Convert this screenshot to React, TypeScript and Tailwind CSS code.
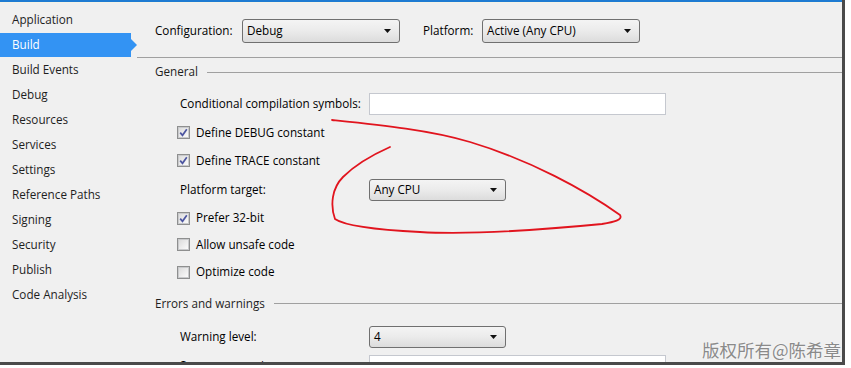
import React from "react";

const navItems = [
  "Application",
  "Build",
  "Build Events",
  "Debug",
  "Resources",
  "Services",
  "Settings",
  "Reference Paths",
  "Signing",
  "Security",
  "Publish",
  "Code Analysis",
];

function Combo({ text, width }: { text: string; width: number }) {
  return (
    <div
      className="relative flex h-full items-center rounded-[3px] border border-[#707070] bg-gradient-to-b from-[#f4f4f4] via-[#ebebeb] to-[#dcdcdc] pl-[4px] text-black"
      style={{ width }}
    >
      <span>{text}</span>
      <svg className="absolute right-[8px] top-1/2 -translate-y-1/2" width="7" height="4" viewBox="0 0 7 4">
        <path d="M0 0 H7 L3.5 4 Z" fill="#111" />
      </svg>
    </div>
  );
}

function Check({ checked, label }: { checked: boolean; label: string }) {
  return (
    <div className="flex h-full items-center pl-[40px]">
      <div className="flex h-[13px] w-[13px] items-center justify-center border border-[#8e8f8f] bg-white">
        <div className="flex h-[11px] w-[11px] items-center justify-center border border-[#c9cacc] bg-gradient-to-br from-[#dcdcdc] to-[#fbfbfb]">
          {checked && (
            <svg width="9" height="9" viewBox="0 0 9 9">
              <path d="M1.2 4.6 L3.5 7.3 L7.8 1.2" stroke="#4c55a0" strokeWidth="1.7" fill="none" />
            </svg>
          )}
        </div>
      </div>
      <span className="ml-[6px]">{label}</span>
    </div>
  );
}

function Heading({ text }: { text: string }) {
  return (
    <div className="flex h-full items-center pl-[18px]">
      <span className="text-[#1e1e1e]">{text}</span>
      <div className="ml-[9px] h-px flex-1 bg-[#a0a0a0]" />
    </div>
  );
}

export default function App() {
  return (
    <div className="relative h-[368px] w-[851px] overflow-hidden bg-white font-['Open_Sans',sans-serif] text-[11.7px] leading-none text-black">
      <div className="flex h-[365px] w-[845px] flex-col overflow-hidden border-b-[3px] border-r-[3px] border-[#4a4a4a] bg-[#f0f0f0] [&>*]:shrink-0">
        <div className="h-[2px] w-full bg-[#1e7bd2]" />
        <div className="h-px w-full bg-[#f4f3e6]" />
        <div className="flex min-h-0 flex-1">
          {/* Sidebar */}
          <div className="flex w-[137px] shrink-0 flex-col pt-[4px] [&>*]:shrink-0">
            {navItems.map((item) =>
              item === "Build" ? (
                <div key={item} className="flex h-[25px] items-stretch pt-px">
                  <div className="flex w-[131px] items-center bg-[#3393f3] pl-[12px] text-white">{item}</div>
                  <div className="flex items-center">
                    <div className="h-0 w-0 border-y-[6px] border-l-[6px] border-y-transparent border-l-[#3393f3]" />
                  </div>
                </div>
              ) : (
                <div key={item} className="flex h-[25px] items-center pl-[12px] text-[#1e1e1e]">
                  {item}
                </div>
              )
            )}
          </div>

          {/* Main */}
          <div className="flex min-w-0 flex-1 flex-col [&>*]:shrink-0">
            <div className="mt-[16px] flex h-[24px] items-center pl-[18px]">
              <span className="w-[87px]">Configuration:</span>
              <Combo text="Debug" width={158} />
              <span className="ml-[23px] w-[59px]">Platform:</span>
              <Combo text="Active (Any CPU)" width={158} />
            </div>
            <div className="mt-[14px] h-px w-full bg-[#a0a0a0]" />
            <div className="h-[28px]">
              <Heading text="General" />
            </div>
            <div className="mt-[7px] flex h-[22px] items-center pl-[43px]">
              <span className="w-[189px]">Conditional compilation symbols:</span>
              <div className="h-full w-[297px] border border-[#c5c8cf] bg-white" />
            </div>
            <div className="h-[4px]" />
            <div className="h-[27px]">
              <Check checked label="Define DEBUG constant" />
            </div>
            <div className="h-[29px]">
              <Check checked label="Define TRACE constant" />
            </div>
            <div className="flex h-[30px] items-center pl-[43px]">
              <span className="w-[189px]">Platform target:</span>
              <div className="h-[22px]">
                <Combo text="Any CPU" width={137} />
              </div>
            </div>
            <div className="h-[26px]">
              <Check checked label="Prefer 32-bit" />
            </div>
            <div className="h-[27px]">
              <Check checked={false} label="Allow unsafe code" />
            </div>
            <div className="h-[28px]">
              <Check checked={false} label="Optimize code" />
            </div>
            <div className="h-[35px]">
              <Heading text="Errors and warnings" />
            </div>
            <div className="flex h-[31px] items-center pl-[43px]">
              <span className="w-[189px]">Warning level:</span>
              <div className="h-[22px]">
                <Combo text="4" width={137} />
              </div>
            </div>
            <div className="mt-[3px] flex h-[22px] items-start pl-[43px]">
              <span className="mt-[5px] w-[189px]">Suppress warnings:</span>
              <div className="h-full w-[297px] border border-[#c5c8cf] bg-white" />
            </div>
          </div>
        </div>
      </div>

      {/* Red hand-drawn annotation */}
      <svg className="pointer-events-none absolute left-0 top-0" width="851" height="368" viewBox="0 0 851 368">
        <path
          d="M332 120 C380 125 430 130 470 142 C530 160 585 190 620 215 C623 220 614 222 602 224 C540 230 470 235 420 232 C380 230 345 226 335 219 C330 205 332 188 343 177 C355 165 372 155 390 147"
          stroke="#e1141e"
          strokeWidth="1.8"
          fill="none"
          strokeLinecap="round"
        />
      </svg>

      {/* Watermark */}
      <div className="absolute right-[10px] top-[341px] font-['Noto_Sans_CJK_SC',sans-serif] text-[17.5px] leading-none text-[#8a8a8a] [text-shadow:0_0_2px_#ffffff]">
        版权所有@陈希章
      </div>
    </div>
  );
}
